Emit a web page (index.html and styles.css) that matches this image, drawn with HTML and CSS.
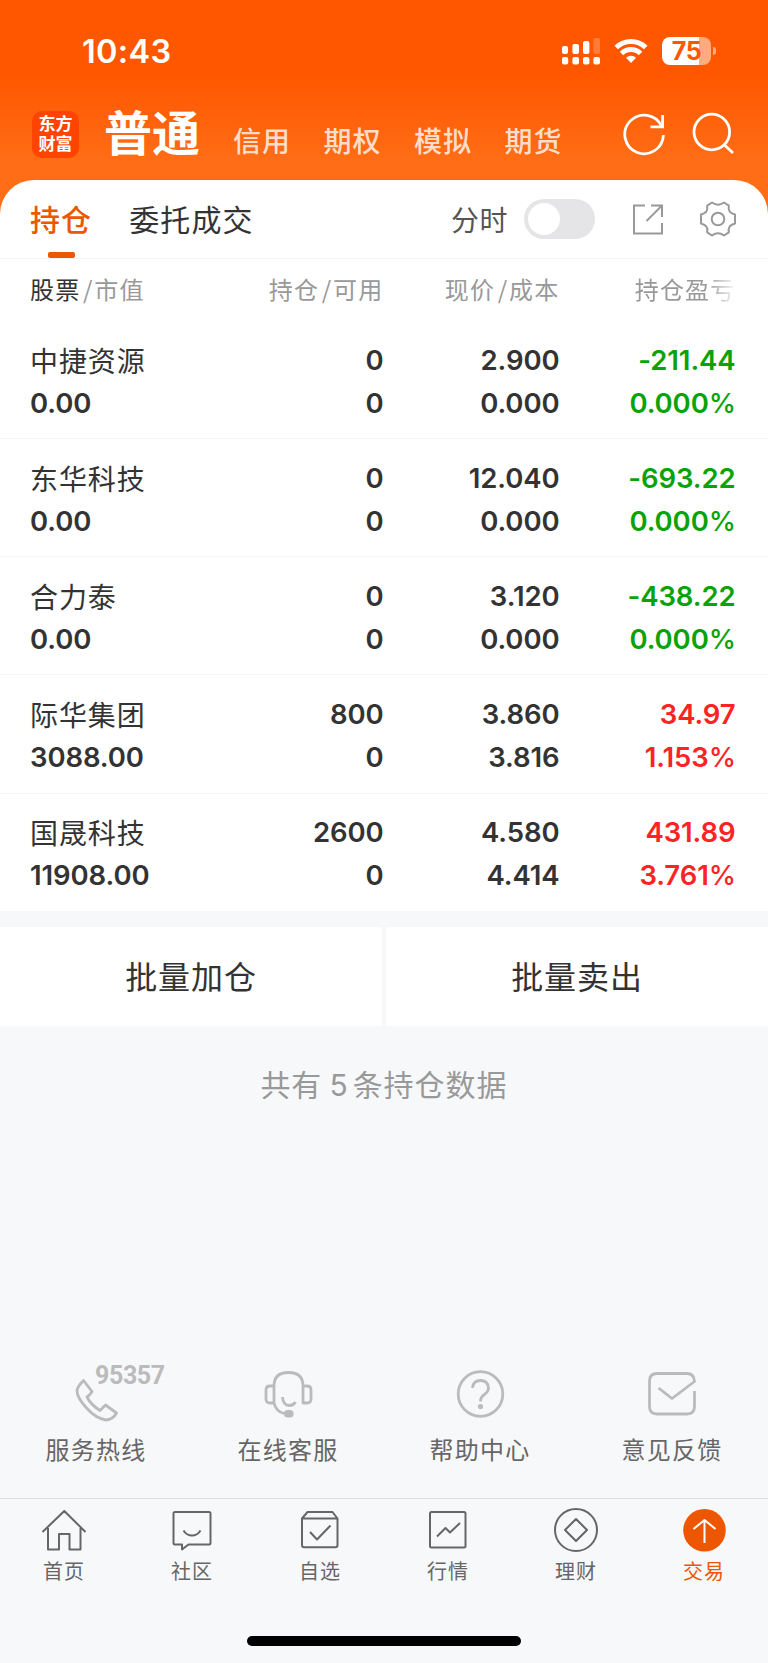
FILE: index.html
```
<!DOCTYPE html>
<html lang="zh-CN">
<head>
<title>持仓</title>
<meta charset="UTF-8">
<meta name="viewport" content="width=device-width, initial-scale=1.0">

<link rel="stylesheet" href="styles.css">

</head>
<body>

<!-- *********************************************************
HEADER
********************************************************** -->

<div class="header">
	<div class="status">
		<div class="clock">10:43</div>
		<svg class="signal" width="38" height="28" viewBox="0 0 38 28" fill="#fff">
			<rect x="0" y="9" width="6" height="8" rx="2"/>
			<rect x="10.4" y="7" width="6.6" height="10" rx="2"/>
			<rect x="21" y="4" width="6.4" height="13" rx="2"/>
			<rect x="31.4" y="1" width="6.6" height="16" rx="2" opacity=".22"/>
			<rect x="0" y="20" width="6.2" height="7.5" rx="2"/>
			<rect x="10.4" y="20" width="6.6" height="7.5" rx="2"/>
			<rect x="21" y="20" width="6.4" height="7.5" rx="2"/>
			<rect x="31.4" y="20" width="6.6" height="7.5" rx="2"/>
		</svg>
		<svg class="wifi" width="34" height="26" viewBox="0 0 34 26" fill="none" stroke="#fff" stroke-width="5">
			<path d="M2.300 9.500a21 21 0 0 1 29.400 0"/>
			<path d="M7.500 15.500a13.500 13.500 0 0 1 19 0"/>
			<path d="M17 25l-5-5.2a7.2 7.2 0 0 1 10 0z" fill="#fff" stroke="none"/>
		</svg>
		<div class="battery">75</div>
		<div class="battery-tip"></div>
	</div>

	<div class="nav">
		<div class="logo">东方<br>财富</div>
		<div class="nav-title">普通</div>
		<div class="nav-item">信用</div>
		<div class="nav-item">期权</div>
		<div class="nav-item">模拟</div>
		<div class="nav-item">期货</div>
		<svg class="nav-icons" width="116" height="46" viewBox="622 111 116 46" fill="none" stroke="#fff" stroke-width="2.8">
			<path d="M663.4 135A19.3 19.3 0 1 1 661.5 126"/>
			<path d="M650.5 126.9H662.6V115"/>
			<circle cx="711.8" cy="132" r="17.8"/>
			<path d="M724 144.5L733 153"/>
		</svg>
	</div>
</div>

<!-- *********************************************************
POSITIONS
********************************************************** -->

<div class="card">
	<div class="tabs">
		<div class="tab active">持仓</div>
		<div class="tab">委托成交</div>
		<div class="switch-label">分时</div>
		<div class="switch"></div>
		<svg class="share" width="34" height="34" viewBox="631 201 34 34" fill="none" stroke="#999" stroke-width="2">
			<path d="M645 204.5H634V232.5H662V222M651 204.5H662V216M646.5 220L662 204.5"/>
		</svg>
		<svg class="gear" width="38" height="38" viewBox="-19 -19 38 38" fill="none" stroke="#999" stroke-width="2">
			<path d="M-6-16.5Q0-12 6-16.5L10.8-13.3C10-8 12-6 17-4.5V4.5C12 6 10 8 10.8 13.3L6 16.5Q0 12-6 16.5L-10.8 13.3C-10 8-12 6-17 4.5V-4.500C-12-6-10-8-10.8-13.3Z" stroke-linejoin="round"/>
			<circle r="6.3"/>
		</svg>
	</div>

	<div class="row head">
		<div><b>股票</b><i>/</i>市值</div>
		<div>持仓<i>/</i>可用</div>
		<div>现价<i>/</i>成本</div>
		<div class="fade">持仓盈亏</div>
	</div>

	<div class="row">
		<div><span class="name">中捷资源</span><span>0.00</span></div>
		<div><span>0</span><span>0</span></div>
		<div><span>2.900</span><span>0.000</span></div>
		<div class="down"><span>-211.44</span><span>0.000<i>%</i></span></div>
	</div>
	<div class="row">
		<div><span class="name">东华科技</span><span>0.00</span></div>
		<div><span>0</span><span>0</span></div>
		<div><span>12.040</span><span>0.000</span></div>
		<div class="down"><span>-693.22</span><span>0.000<i>%</i></span></div>
	</div>
	<div class="row">
		<div><span class="name">合力泰</span><span>0.00</span></div>
		<div><span>0</span><span>0</span></div>
		<div><span>3.120</span><span>0.000</span></div>
		<div class="down"><span>-438.22</span><span>0.000<i>%</i></span></div>
	</div>
	<div class="row">
		<div><span class="name">际华集团</span><span>3088.00</span></div>
		<div><span>800</span><span>0</span></div>
		<div><span>3.860</span><span>3.816</span></div>
		<div class="up"><span>34.97</span><span>1.153<i>%</i></span></div>
	</div>
	<div class="row last">
		<div><span class="name">国晟科技</span><span>11908.00</span></div>
		<div><span>2600</span><span>0</span></div>
		<div><span>4.580</span><span>4.414</span></div>
		<div class="up"><span>431.89</span><span>3.761<i>%</i></span></div>
	</div>
</div>

<div class="batch">
	<div>批量加仓</div>
	<div>批量卖出</div>
</div>

<div class="total">共有<em>5</em>条持仓数据</div>

<!-- *********************************************************
SERVICES
********************************************************** -->

<div class="services">
	<div>
		<svg width="100" height="60" viewBox="46 1364 100 60">
			<path d="M83.5 1380.5L92 1391.5Q90 1395 87 1397Q91 1405 100 1410.5L105.5 1405L116.5 1413Q113 1419.5 106 1420Q96 1418.5 86.5 1408Q77 1397.5 77 1391Q77 1387 83.5 1380.5Z"/>
		</svg>
		<span class="hotline">95357</span>
		服务热线
	</div>
	<div>
		<svg width="100" height="60" viewBox="238 1364 100 60">
			<path d="M274 1403V1386Q274 1372.5 288.500 1372.5T303 1386V1403H307Q311 1403 311 1399V1390Q311 1386 307 1386H303M274 1386H270Q266 1386 266 1390V1399Q266 1403 270 1403H274Q276 1411.5 284 1413.5"/>
			<path d="M282.5 1397Q283 1405.5 289.5 1405.5Q293.5 1405.5 295.5 1402"/>
			<rect class="solid" x="284" y="1410" width="9.5" height="7.5" rx="3.5"/>
		</svg>
		在线客服
	</div>
	<div>
		<svg width="100" height="60" viewBox="430 1364 100 60">
			<circle cx="480.5" cy="1394" r="22.3"/>
			<path d="M472.5 1388Q473 1380.5 480.5 1380.5T488.500 1388Q488.5 1391.5 484.5 1394.5Q480.5 1397 480.5 1401.5"/>
			<circle class="solid" cx="480.5" cy="1406.5" r="2.6"/>
		</svg>
		帮助中心
	</div>
	<div>
		<svg width="100" height="60" viewBox="622 1364 100 60">
			<path d="M694.5 1391V1406.5Q694.5 1414 687 1414H657Q649.5 1414 649.5 1406.5V1381Q649.5 1373.5 657 1373.5H687Q694 1373.5 694.5 1381.5L672 1398.5L658.5 1388"/>
		</svg>
		意见反馈
	</div>
</div>

<!-- *********************************************************
TAB BAR
********************************************************** -->

<div class="tabbar">
	<div>
		<svg width="50" height="50" viewBox="39 1504 50 50">
			<path d="M42.5 1532L64.3 1511L85.5 1532M48 1528V1549.5H59V1534H69.5V1549.5H80.5V1528"/>
		</svg>
		首页
	</div>
	<div>
		<svg width="50" height="50" viewBox="167 1504 50 50">
			<path d="M175 1512H209Q210.5 1512 210.5 1513.5V1543Q210.5 1544.5 209 1544.5H188.5L182 1549.5V1544.5H175Q173.5 1544.5 173.5 1543V1513.5Q173.5 1512 175 1512ZM183.5 1530.5Q186.5 1535.5 192 1535.5T200.5 1530.5"/>
		</svg>
		社区
	</div>
	<div>
		<svg width="50" height="50" viewBox="295 1504 50 50">
			<path d="M302 1518.5L307.5 1512H332.5L337.5 1518.5V1545Q337.5 1547.3 335.3 1547.3H304.2Q302 1547.3 302 1545ZM302 1518.5H337.5M310 1532L317 1539.5L330.5 1525.5"/>
		</svg>
		自选
	</div>
	<div>
		<svg width="50" height="50" viewBox="423 1504 50 50">
			<rect x="430" y="1512" width="35.5" height="35.5" rx="1.5"/>
			<path d="M437 1536.5L445.5 1528L450 1532.5L460 1523"/>
		</svg>
		行情
	</div>
	<div>
		<svg width="50" height="50" viewBox="551 1504 50 50">
			<circle cx="576" cy="1530" r="21"/>
			<path d="M576 1519L587 1530L576 1541L565 1530Z"/>
		</svg>
		理财
	</div>
	<div class="on">
		<svg width="50" height="50" viewBox="679 1504 50 50">
			<circle cx="704.5" cy="1530.3" r="21.3" fill="#ed5602" stroke="none"/>
			<path d="M704.5 1543V1520M693.5 1529L704.5 1520L715.5 1529" stroke="#fff"/>
		</svg>
		交易
	</div>
</div>

<div class="home-bar"></div>

</body>
</html>
```
FILE: styles.css
```
*{
	box-sizing: border-box;
}

body{
	margin: 0px;
	background: #f7f8fa;
	color: #333;
	font-family: "Noto Sans CJK SC", sans-serif;
	font-size: 28px;
	overflow: hidden;
}

svg{
	display: block;
	flex: none;
}


/*********************************************************
HEADER
**********************************************************/

.header{
	height: 240px;
	background: linear-gradient(#ff5700 0px, #ff5700 75px, #ff6e17 165px);
	color: #fff;
}

.status{
	display: flex;
	height: 102px;
	padding: 0px 52px 0px 82px;
	align-items: center;
}

.clock{
	flex: 1;
	font: 600 32.5px Inter, sans-serif;
	letter-spacing: 0.3px;
}

.wifi{
	margin: 0px 14px;
}

.battery{
	width: 49px;
	height: 28px;
	border-radius: 8px;
	background: linear-gradient(90deg, #fff 75%, #ffab80 75%);
	color: #ff5700;
	font: 700 25px/29px Inter, sans-serif;
	letter-spacing: -0.5px;
	text-align: center;
}

.battery-tip{
	width: 3px;
	height: 8px;
	margin-left: 2px;
	border-radius: 0px 4px 4px 0px;
	background: #ffab80;
}

.nav{
	display: flex;
	height: 64px;
	padding-left: 32px;
	align-items: center;
}

.logo{
	width: 47px;
	height: 47px;
	border-radius: 10px;
	background: #ff4400;
	font-size: 17px;
	line-height: 20px;
	font-weight: 700;
	text-align: center;
	padding-top: 2px;
}

.nav-title{
	margin: 0px 33px 0px 25px;
	padding-bottom: 7px;
	font-size: 48px;
	line-height: 57px;
	font-weight: 700;
}

.nav-item{
	width: 90.5px;
	padding-top: 12px;
	font-size: 28px;
	line-height: 36px;
	font-weight: 500;
	letter-spacing: 1px;
	color: #ffddcb;
}

.nav-icons{
	margin-left: 27px;
}


/*********************************************************
POSITIONS
**********************************************************/

.card{
	height: 731px;
	margin-top: -60.5px;
	border-radius: 34px 34px 0px 0px;
	background: #fff;
}

.tabs{
	display: flex;
	height: 79px;
	padding: 1px 31px 0px 30px;
	align-items: center;
	border-bottom: 1.5px solid #f4f4f5;
}

.tab{
	position: relative;
	margin-right: 37px;
	font-size: 30px;
	line-height: 75px;
	padding-bottom: 2px;
	letter-spacing: 1.1px;
}

.active{
	color: #ed5602;
	font-weight: 500;
}

.active:after{
	content: '';
	position: absolute;
	left: 17.5px;
	bottom: 0px;
	width: 27px;
	height: 5.5px;
	border-radius: 2px;
	background: #ed5602;
}

.switch-label{
	margin-left: auto;
	color: #555;
	letter-spacing: 0.5px;
}

.switch{
	width: 71px;
	height: 40px;
	margin: 0px 36px 0px 16px;
	padding: 4px;
	border-radius: 20px;
	background: #e5e5e7;
}

.switch:before{
	content: '';
	display: block;
	width: 32px;
	height: 32px;
	border-radius: 50%;
	background: #fff;
}

.gear{
	margin-left: 34px;
}

.row{
	display: grid;
	grid-template-columns: 177.5px 176px 176px 176px;
	height: 118.15px;
	padding: 17.5px 0px 0px 30px;
	border-bottom: 1.5px solid #f6f6f7;
	font: 600 27.5px/43.5px Inter, sans-serif;
	letter-spacing: -0.1px;
	text-align: right;
}

.row > div:first-child{
	text-align: left;
}

.row span{
	display: block;
	height: 43px;
}

.row i{
	font-style: normal;
	font-weight: 500;
	letter-spacing: -0.5px;
}

.row .name{
	font: 400 28px/42px "Noto Sans CJK SC", sans-serif;
	letter-spacing: 0.9px;
}

.row.head{
	height: 62.5px;
	padding-top: 10px;
	border: none;
	color: #999;
	font: 400 24px/40px "Noto Sans CJK SC", sans-serif;
	letter-spacing: 1.2px;
}

.head b{
	color: #333;
	font-weight: 400;
}

.head i{
	margin: 0px 2.5px;
	font-weight: 400;
}

.row .fade{
	-webkit-mask-image: linear-gradient(90deg, #000 146px, transparent 178px);
	mask-image: linear-gradient(90deg, #000 146px, transparent 178px);
}

.row.last{
	border: none;
}

.down{
	color: #09a309;
}

.up{
	color: #fb2323;
}

.batch{
	display: flex;
	gap: 4px;
	margin-top: 16.5px;
}

.batch div{
	flex: 1;
	height: 99px;
	background: #fff;
	font-size: 32px;
	line-height: 97px;
	letter-spacing: 0.9px;
	text-align: center;
}

.total{
	height: 338px;
	padding-top: 35px;
	font-size: 30px;
	line-height: 44px;
	letter-spacing: 1px;
	color: #999;
	text-align: center;
}

.total em{
	margin: 0px 6px 0px 7px;
	font: 400 30px/40px Inter, sans-serif;
	letter-spacing: -1px;
}


/*********************************************************
SERVICES
**********************************************************/

.services{
	display: flex;
	height: 134px;
	font-size: 24px;
	line-height: 49px;
	letter-spacing: 1.2px;
	color: #666;
}

.services div{
	position: relative;
	flex: 1;
	text-align: center;
}

.services svg{
	margin: 0px auto;
	fill: none;
	stroke: #bbb;
	stroke-width: 2.8px;
	stroke-linejoin: round;
}

.services .solid{
	fill: #bbb;
	stroke: none;
}

.hotline{
	position: absolute;
	left: 95px;
	top: 0px;
	font: 700 25px/24px Roboto, sans-serif;
	letter-spacing: -0.4px;
	color: #bbb;
}


/*********************************************************
TAB BAR
**********************************************************/

.tabbar{
	display: flex;
	height: 138px;
	padding-top: 5px;
	border-top: 1.5px solid #dddee0;
	font-size: 20px;
	line-height: 34px;
	letter-spacing: 1px;
	color: #666;
}

.tabbar div{
	flex: 1;
	text-align: center;
}

.tabbar svg{
	margin: 0px auto;
	fill: none;
	stroke: #666;
	stroke-width: 2px;
	stroke-linejoin: round;
}

.tabbar .on{
	color: #ed5602;
}

.home-bar{
	width: 274px;
	height: 10px;
	margin: 0px auto;
	border-radius: 5px;
	background: #000;
}
```
